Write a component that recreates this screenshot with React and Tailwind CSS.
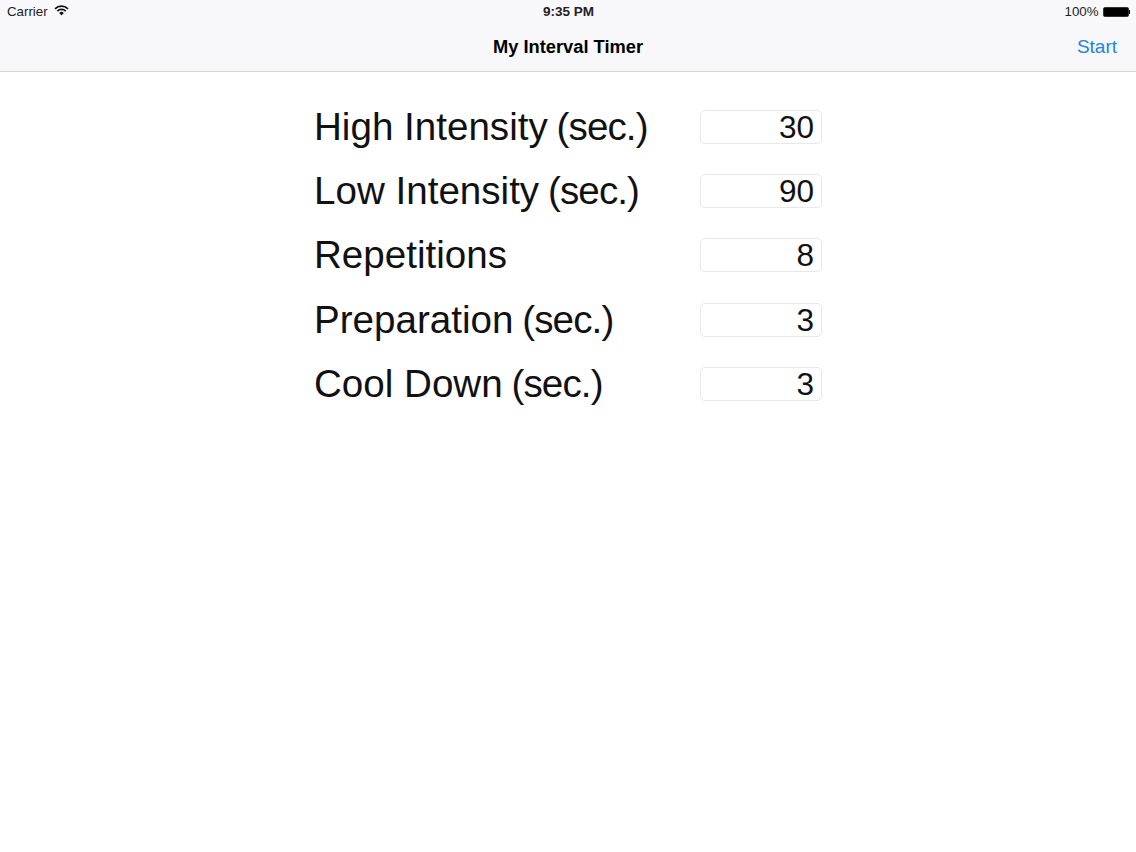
import React from 'react';

const fields = [
  { label: 'High Intensity', unit: '(sec.)', value: '30' },
  { label: 'Low Intensity', unit: '(sec.)', value: '90' },
  { label: 'Repetitions', value: '8' },
  { label: 'Preparation', unit: '(sec.)', value: '3' },
  { label: 'Cool Down', unit: '(sec.)', value: '3' },
];

const Wifi = () => (
  <svg width="15" height="11" viewBox="0 0 15 11" className="ml-[6px] mb-[2px]">
    <path d="M1 3.8 A9.4 9.4 0 0 1 14 3.8" fill="none" stroke="#111" strokeWidth="1.7" />
    <path d="M3.3 6.1 A6.2 6.2 0 0 1 11.7 6.1" fill="none" stroke="#111" strokeWidth="1.7" />
    <path d="M5.2 8 A3.2 3.2 0 0 1 9.8 8 L7.5 10.6 Z" fill="#111" />
  </svg>
);

const Battery = () => (
  <div className="ml-[4px] flex items-center">
    <div className="w-[26px] h-[10px] bg-black rounded-[2px] border border-[#333]" />
    <div className="w-[1.5px] h-[4px] bg-black" />
  </div>
);

export default function App() {
  return (
    <div className="w-[1136px] h-[852px] bg-white font-['Liberation_Sans',Arial,sans-serif] text-black overflow-hidden">
      <div className="h-[72px] bg-[#f8f7fa] border-b border-[#d6d6d8]">
        <div className="h-[23px] pl-[7px] pr-[6px] flex items-center justify-between relative text-[13.3px] text-[#222]">
          <div className="flex items-center">
            <span>Carrier</span>
            <Wifi />
          </div>
          <span className="absolute left-[543px] top-[3px] font-bold text-[13.5px] leading-[17px]">9:35 PM</span>
          <div className="flex items-center">
            <span>100%</span>
            <Battery />
          </div>
        </div>
        <div className="h-[48px] relative flex items-center justify-center">
          <span className="text-[18.3px] font-bold">My Interval Timer</span>
          <span className="absolute right-[19px] top-[10px] text-[19px] text-[#2086e0]">Start</span>
        </div>
      </div>
      <div className="pt-[38px] pl-[314px] flex flex-col gap-[30.2px]">
        {fields.map((f) => (
          <div key={f.label} className="flex items-center h-[34px]">
            <div className="w-[386px] text-[38.6px] leading-[34px] text-[#111]">
              {f.label}
              {f.unit && <span className="ml-[-1px] tracking-[-0.9px]"> {f.unit}</span>}
            </div>
            <div className="w-[122px] h-[34px] border border-[#e8e8e8] rounded-[5px] pr-[7px] text-right text-[31.5px] leading-[32px] text-[#111]">
              {f.value}
            </div>
          </div>
        ))}
      </div>
    </div>
  );
}
